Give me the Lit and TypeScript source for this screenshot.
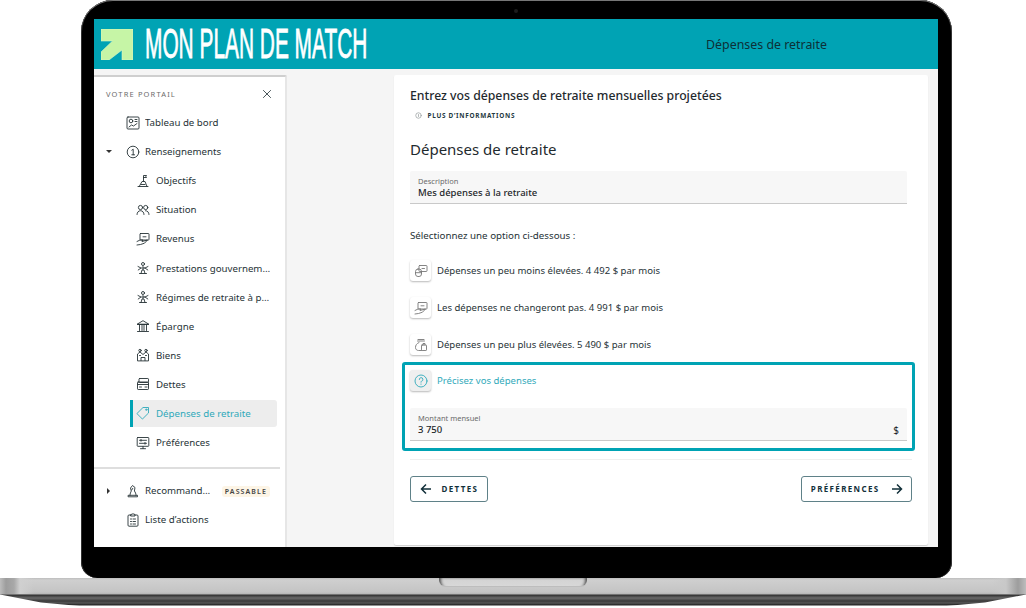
import { LitElement, html, css, svg } from "lit";
import { customElement } from "lit/decorators.js";

const ic = (body: unknown, size = 14) => html`<svg class="ic" width=${size} height=${size} viewBox="0 0 14 14" fill="none" stroke="currentColor" stroke-width="0.9" stroke-linecap="round" stroke-linejoin="round">${body}</svg>`;

const icons: Record<string, unknown> = {
  board: svg`<rect x="1" y="1" width="12" height="12" rx="1"/><circle cx="5" cy="5" r="1.8"/><path d="M9 3.500h2M9 5.500h2M3 11l2.500-2 2 1 3.500-2.500"/>`,
  one: svg`<circle cx="7" cy="7" r="5.800"/><path d="M5.800 5.200 7.200 4.200v5.600M5.800 9.800h2.800"/>`,
  goal: svg`<path d="M7.500 7V1.500h3l-.6 1 .6 1h-3M2 12.500h10M3.200 12.500 6 7.500h3l2 5M5 10.500h4"/>`,
  people: svg`<circle cx="4.500" cy="4.500" r="2.100"/><circle cx="9.700" cy="4.500" r="2.100"/><path d="M1 11.500c0-2.200 1.500-3.800 3.500-3.800S8 9.300 8 11.500M9.500 7.700c2 0 3.500 1.600 3.500 3.800"/>`,
  income: svg`<rect x="4" y="1.500" width="9" height="6.500" rx=".6"/><path d="M7 4.800h3M1 9.500l3-1.500h3l-1 1.500 3-.8 2.500-.7-3 3.200-4 1.300-3.500.5"/>`,
  gov: svg`<circle cx="7" cy="3" r="1.500"/><circle cx="7" cy="7" r="1.200"/><path d="M2 5.500 5 7l-2.800 2M12 5.500 9 7l2.800 2M5 12.500l1-3.500h2l1 3.500M3.500 12.500h7"/>`,
  bank: svg`<path d="M1.500 5 7 1.700 12.500 5zM1.500 5.500h11M3.500 6v5.500M6 6v5.500M8 6v5.500M10.500 6v5.500M1.500 12.500h11"/>`,
  home: svg`<circle cx="4" cy="2.500" r="1.200"/><circle cx="10" cy="2.500" r="1.200"/><path d="M1.500 12.500V6l2.500-2 3 2.500L10 4l2.500 2v6.500zM5 12.500v-3h4v3M3.500 7.500h1M9.500 7.500h1"/>`,
  debt: svg`<rect x="3" y="1.500" width="9.500" height="4" rx=".7"/><rect x="1.500" y="5" width="11" height="7.500" rx=".7"/><path d="M1.500 7.500h11M3.500 10h2M9 10h2"/>`,
  tag: svg`<path d="M1.200 7.300 7 1.500h5.500V7l-5.800 5.800z"/><circle cx="10.300" cy="3.700" r=".7"/>`,
  pref: svg`<rect x="1.200" y="1.500" width="11.600" height="8.800" rx=".6"/><path d="M3.500 4.300h7M3.500 7.300h7M5 3.400v1.800M9 6.400v1.800M7 10.500v2M4.500 12.700h5"/>`,
  reco: svg`<path d="M2.500 12.800h9v-1.500h-9zM4 11.300c0-2 .8-3 1.300-4.300L4.500 4l2-2.500L9 3.500l-.6 3.500c1 1.300 1.600 2.700 1.600 4.300M6.800 4.300l-1 1.600"/>`,
  list: svg`<path d="M5 2H3a1 1 0 0 0-1 1v9.200a1 1 0 0 0 1 1h8a1 1 0 0 0 1-1V3a1 1 0 0 0-1-1H9M5 1.500 7 .8l2 .7V3H5zM4.500 6h1M7 6h2.500M4.500 8.500h1M7 8.500h2.500M4.500 11h1M7 11h2.500"/>`,
  less: svg`<rect x="5" y="1.500" width="8" height="6" rx=".7"/><rect x="1.500" y="5" width="6" height="7.500" rx="2.500"/><path d="M1.500 8.700h6M8 4.500h2.500"/>`,
  same: svg`<rect x="4" y="1.500" width="9" height="6.500" rx=".6"/><path d="M7 4.800h3M1 9.500l3-1.500h3l-1 1.500 3-.8 2.500-.7-3 3.200-4 1.300-3.500.5"/>`,
  more: svg`<path d="M4 1.500h6M3.500 3h7M5 4.500c-2.500 1-3.500 3-3.500 5 0 2 1.500 3 3 3h3"/><rect x="7.500" y="7" width="5" height="5.500" rx=".6"/><path d="M9 7V5.500h2V7"/>`,
  ask: svg`<circle cx="7" cy="7" r="6"/><path d="M5.300 5.500A1.800 1.800 0 1 1 7.500 7.200c-.4.200-.5.500-.5 1M7 10v.3"/>`,
  info: svg`<circle cx="7" cy="7" r="5.500" stroke-width="1.500"/><path d="M7 5v4" stroke-width="1.500"/>`,
  close: svg`<path d="M2 2l10 10M12 2 2 12" stroke-width="1.200"/>`,
};

type Row = { icon: string; label: string; sub?: boolean; active?: boolean; caret?: string; badge?: string };

const rows: Row[] = [
  { icon: "board", label: "Tableau de bord" },
  { icon: "one", label: "Renseignements", caret: "down" },
  { icon: "goal", label: "Objectifs", sub: true },
  { icon: "people", label: "Situation", sub: true },
  { icon: "income", label: "Revenus", sub: true },
  { icon: "gov", label: "Prestations gouvernementales", sub: true },
  { icon: "gov", label: "Régimes de retraite à prestations", sub: true },
  { icon: "bank", label: "Épargne", sub: true },
  { icon: "home", label: "Biens", sub: true },
  { icon: "debt", label: "Dettes", sub: true },
  { icon: "tag", label: "Dépenses de retraite", sub: true, active: true },
  { icon: "pref", label: "Préférences", sub: true },
];

const options = [
  { icon: "less", label: "Dépenses un peu moins élevées. 4 492 $ par mois" },
  { icon: "same", label: "Les dépenses ne changeront pas. 4 991 $ par mois" },
  { icon: "more", label: "Dépenses un peu plus élevées. 5 490 $ par mois" },
];

@customElement("app-root")
export class AppRoot extends LitElement {
  static styles = css`
    :host { display: block; width: 1026px; height: 608px; overflow: hidden; background: #fff; font-family: "Noto Sans", sans-serif; color: #2b3a3e; }
    * { box-sizing: border-box; }
    .ic { display: block; flex: none; }
    .bezel { position: relative; width: 871px; height: 578px; margin-left: 81px; padding: 19px 14px 31px 13px; background: #000; border-radius: 32px 32px 16px 16px; box-shadow: inset 0 1px 0 #777, inset 1px 0 0 #333, inset -1px 0 0 #333; }
    .cam { position: absolute; left: 433px; top: 9px; width: 4px; height: 4px; border-radius: 50%; background: #1c1c1c; }
    .screen { height: 528px; background: #f5f5f5; display: flex; flex-direction: column; overflow: hidden; }
    .top { height: 50px; flex: none; background: #00a3b4; display: flex; align-items: center; padding-left: 7px; }
    .logo { flex: none; }
    .brand { width: 223px; margin-left: 12px; font-family: "Liberation Sans", sans-serif; font-weight: 400; font-size: 42px; line-height: 50px; color: #fff; -webkit-text-stroke: 0.8px #fff; white-space: nowrap; transform: scaleX(0.497); transform-origin: left center; }
    .page { margin-left: 338px; font-size: 12.400px; color: #0d3037; white-space: nowrap; }
    .body { flex: 1; display: flex; padding-top: 6px; min-height: 0; }
    .side { width: 193px; flex: none; background: #fff; border-top: 2px solid #cfcfcf; border-right: 2px solid #e6e6e6; border-top-right-radius: 2px; display: flex; flex-direction: column; }
    .side-head { height: 30px; display: flex; align-items: center; justify-content: space-between; padding: 0 13px 0 12px; margin-top: 2px; }
    .eyebrow { font-size: 7.500px; letter-spacing: 1.150px; color: #6c6c6c; }
    .nav { display: flex; flex-direction: column; gap: 2px; padding: 0 8px 0 12px; }
    .row { height: 27.100px; display: flex; align-items: center; padding: 0 5px 0 20px; gap: 5px; position: relative; font-size: 9.700px; color: #263236; white-space: nowrap; }
    .row.sub { padding-left: 30px; gap: 6px; }
    .row.active { margin-left: 24px; padding-left: 3px; background: #ededed; border-left: 3px solid #00a3b4; border-radius: 0 3px 3px 0; color: #2fa9ba; }
    .label { overflow: hidden; text-overflow: ellipsis; flex: 1; min-width: 0; }
    .caret { width: 0; height: 0; position: absolute; }
    .caret.down { left: 0; top: 12px; border: 3px solid transparent; border-top: 3px solid #333; border-bottom: 0; }
    .caret.right { left: 1px; top: 11px; border: 3px solid transparent; border-left: 3px solid #333; border-right: 0; }
    .rule { height: 2px; background: #dedede; margin: 11px 5px 8px 0; flex: none; }
    .badge { flex: none; font-size: 7px; font-weight: 600; letter-spacing: 1.100px; padding: 1px 3px; background: #fdf5e6; border-radius: 3px; color: #444; margin: 2px 2px 0 3px; }
    .main { flex: 1; padding-left: 107px; padding-right: 10px; min-width: 0; }
    .card { height: 470px; background: #fff; border-radius: 2px; box-shadow: 0 1px 1px #cfcfcf; padding: 12px 16px 0; display: flex; flex-direction: column; }
    h1 { margin: 0; font-size: 12.250px; line-height: 17px; font-weight: 500; color: #1f2a2e; white-space: nowrap; }
    .more { display: flex; align-items: center; gap: 6px; margin: 4px 0 0 4.500px; height: 15px; color: #9aa0a2; }
    .more span { font-size: 6.400px; font-weight: 700; letter-spacing: .72px; color: #1f3a42; }
    h2 { margin: 14px 0 0; font-size: 15px; line-height: 24px; font-weight: 400; color: #1f2a2e; }
    .field { height: 33px; width: 497px; background: #f7f7f7; border-bottom: 1px solid #c9c9c9; border-radius: 2px 2px 0 0; padding: 5px 8px 0; display: flex; justify-content: space-between; align-items: flex-end; flex: none; }
    .field .txt { display: flex; flex-direction: column; align-self: flex-start; }
    .field small { font-size: 7.500px; line-height: 11px; color: #6b6b6b; }
    .field b { font-size: 9.500px; line-height: 12px; font-weight: 500; color: #1d262a; }
    .field i { font-style: normal; font-size: 10px; line-height: 12px; margin-bottom: 4px; color: #1d262a; }
    .desc { margin-top: 10px; }
    .hint { margin: 25px 0 0; font-size: 9.750px; line-height: 14px; color: #263236; }
    .opts { display: flex; flex-direction: column; gap: 16px; margin-top: 17px; }
    .opt { height: 21px; display: flex; align-items: center; gap: 6px; font-size: 9.550px; color: #263236; white-space: nowrap; }
    .tile { width: 21px; height: 21px; flex: none; display: flex; align-items: center; justify-content: center; border-radius: 3px; background: #fff; box-shadow: 0 1px 2px rgba(0,0,0,.28); color: #777; }
    .sel { margin: 7px -3px 0 -8px; width: 513px; height: 89px; border: 3px solid #00a3b4; border-radius: 3px; padding: 5px 5px 0; flex: none; }
    .sel .opt { color: #2fa9ba; }
    .sel .tile { background: #efefef; color: #2fa9ba; }
    .sel .field { margin-top: 17px; }
    .sep { height: 1px; background: #efefef; margin-top: 8px; width: 502px; flex: none; }
    .btns { display: flex; justify-content: space-between; width: 502px; margin-top: 16px; }
    .btn { height: 26px; display: flex; align-items: center; gap: 11px; padding: 0 8.500px 1px; background: #fff; border: 1.500px solid #5f8188; border-radius: 3px; font: 700 8px "Noto Sans", sans-serif; letter-spacing: 1.350px; color: #12303a; }
    .btn.back { gap: 10px; }
    .btn svg { display: block; flex: none; }
    .base { height: 30px; background:
        linear-gradient(90deg, #bdbdbd 0, #9d9d9d 6px, #a8a8a8 14px, #d0d0d0 20px, transparent 34px, transparent calc(100% - 34px), #c8c8c8 calc(100% - 20px), #9d9d9d calc(100% - 8px), #bdbdbd 100%) 0 0 / 100% 16px no-repeat,
        linear-gradient(#bdbdbd 0, #cfcfcf 2px, #c4c4c4 14px, #b5b5b5 16px, #2f2f2f 17px, #6a6a6a 20px, #3a3a3a 23px, #555 25px, #222 27px, #fff 28px);
      clip-path: polygon(0 0, 100% 0, 100% 55%, 99.500% 58%, 96% 82%, 92% 94%, 8% 94%, 4% 82%, 0.500% 58%, 0 55%); }
    .notch { display: block; width: 148px; height: 8px; margin-left: 439px; background: linear-gradient(#d2d2d2, #d8d8d8); box-shadow: inset -4px 1px 3px -2px #555, inset 4px 1px 3px -2px #555, 0 1px 0 #bdbdbd; border-radius: 0 0 6px 6px; }
  `;

  private row(r: Row) {
    return html`<div class="row ${r.sub ? "sub" : ""} ${r.active ? "active" : ""}">
      ${r.caret ? html`<span class="caret ${r.caret}"></span>` : ""}
      ${ic(icons[r.icon])}
      <span class="label">${r.label}</span>
      ${r.badge ? html`<span class="badge">${r.badge}</span>` : ""}
    </div>`;
  }

  private field(label: string, value: string, unit = "") {
    return html`<div class="txt"><small>${label}</small><b>${value}</b></div>${unit ? html`<i>${unit}</i>` : ""}`;
  }

  render() {
    return html`
      <div class="bezel">
        <span class="cam"></span>
        <div class="screen">
          <header class="top">
            <svg class="logo" width="32" height="31" viewBox="0 0 32 31"><path d="M0 0H32V31H21V21L8 31H0V23L11.500 12H0Z" fill="#c6f5a6" stroke="#dcf9c8" stroke-width=".6"/></svg>
            <div class="brand">MON PLAN DE MATCH</div>
            <div class="page">Dépenses de retraite</div>
          </header>
          <div class="body">
            <aside class="side">
              <div class="side-head"><span class="eyebrow">VOTRE PORTAIL</span>${ic(icons.close, 10)}</div>
              <nav class="nav">${rows.map((r) => this.row(r))}</nav>
              <div class="rule"></div>
              <nav class="nav">
                ${this.row({ icon: "reco", label: "Recommandations", caret: "right", badge: "PASSABLE" })}
                ${this.row({ icon: "list", label: "Liste d’actions" })}
              </nav>
            </aside>
            <main class="main">
              <section class="card">
                <h1>Entrez vos dépenses de retraite mensuelles projetées</h1>
                <div class="more">${ic(icons.info, 7)}<span>PLUS D’INFORMATIONS</span></div>
                <h2>Dépenses de retraite</h2>
                <div class="field desc">${this.field("Description", "Mes dépenses à la retraite")}</div>
                <p class="hint">Sélectionnez une option ci-dessous :</p>
                <div class="opts">
                  ${options.map((o) => html`<div class="opt"><span class="tile">${ic(icons[o.icon])}</span>${o.label}</div>`)}
                </div>
                <div class="sel">
                  <div class="opt"><span class="tile">${ic(icons.ask)}</span>Précisez vos dépenses</div>
                  <div class="field">${this.field("Montant mensuel", "3 750", "$")}</div>
                </div>
                <div class="sep"></div>
                <div class="btns">
                  <button class="btn back"><svg width="12" height="12" viewBox="0 0 12 12" fill="none" stroke="#12303a" stroke-width="1.500"><path d="M11 6H1.500M6 1.500 1.500 6 6 10.500"/></svg>DETTES</button>
                  <button class="btn">PRÉFÉRENCES<svg width="12" height="12" viewBox="0 0 12 12" fill="none" stroke="#12303a" stroke-width="1.500"><path d="M1 6h9.500M6 1.500 10.500 6 6 10.500"/></svg></button>
                </div>
              </section>
            </main>
          </div>
        </div>
      </div>
      <div class="base"><span class="notch"></span></div>
    `;
  }
}
